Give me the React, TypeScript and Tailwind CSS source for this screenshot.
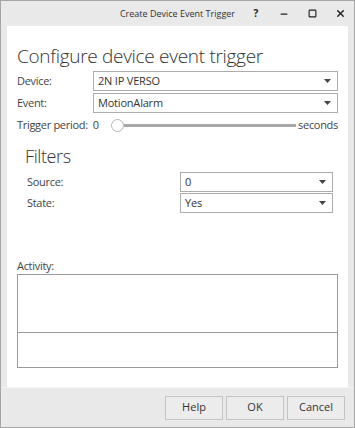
import { Minus, Square, X } from "lucide-react";

const FONT = { fontFamily: '"Open Sans", "Noto Sans", sans-serif' };

function Select({ value, className }: { value: string; className?: string }) {
  return (
    <div
      className={`flex h-[20px] items-center justify-between border border-[#acacac] bg-white pl-[4px] pr-[6px] text-[11px] tracking-[-0.2px] text-[#333] ${className ?? ""}`}
    >
      <span>{value}</span>
      <svg width="7" height="4" viewBox="0 0 7 4" className="fill-[#444]">
        <path d="M0 0h7L3.5 4z" />
      </svg>
    </div>
  );
}

export default function App() {
  return (
    <div
      className="flex h-[428px] w-[355px] flex-col border border-[#a6a6a6] bg-[#e9e9e9] text-[#444]"
      style={FONT}
    >
      {/* Title bar */}
      <div className="relative flex h-[25px] shrink-0 items-center justify-center text-[9px] text-[#333]">
        <span>Create Device Event Trigger</span>
        <div className="absolute right-0 top-0 flex h-full items-center text-[#222]">
          <span className="flex w-[28px] justify-center text-[10px] font-bold">?</span>
          <span className="flex w-[28px] justify-center">
            <Minus size={10} strokeWidth={3} />
          </span>
          <span className="flex w-[28px] justify-center">
            <Square size={9} strokeWidth={3} />
          </span>
          <span className="flex w-[28px] justify-center">
            <X size={11} strokeWidth={3} />
          </span>
        </div>
      </div>

      {/* Content */}
      <div className="mx-[6px] flex flex-1 flex-col bg-white px-[10px] pt-[18px] text-[11px] tracking-[-0.3px]">
        <h1 className="text-[19px] font-light leading-[24px] tracking-[-0.3px] text-[#333]">
          Configure device event trigger
        </h1>

        <div className="mt-[3px] flex flex-col gap-[2px]">
          <div className="flex items-center">
            <span className="w-[76px]">Device:</span>
            <Select value="2N IP VERSO" className="flex-1" />
          </div>
          <div className="flex items-center">
            <span className="w-[76px]">Event:</span>
            <Select value="MotionAlarm" className="flex-1" />
          </div>
          <div className="flex h-[20px] items-center">
            <span className="flex w-[94px] shrink-0">
              <span>Trigger period:</span>
              <span className="ml-[5px]">0</span>
            </span>
            <div className="flex flex-1 items-center">
              <span className="h-[13px] w-[13px] shrink-0 rounded-full border border-[#b5b5b5] bg-white" />
              <span className="h-[3px] flex-1 bg-[#a8a8a8]" />
            </div>
            <span className="ml-[2px]">seconds</span>
          </div>
        </div>

        <h2 className="mt-[10px] pl-[8px] text-[18px] font-light leading-[22px] tracking-[-0.4px] text-[#333]">
          Filters
        </h2>

        <div className="mt-[5px] flex flex-col gap-[1px] pl-[10px] pr-[5px]">
          <div className="flex items-center">
            <span className="w-[153px]">Source:</span>
            <Select value="0" className="flex-1" />
          </div>
          <div className="flex items-center">
            <span className="w-[153px]">State:</span>
            <Select value="Yes" className="flex-1" />
          </div>
        </div>

        <div className="mt-[45px] leading-[16px]">Activity:</div>
        <div className="flex h-[94px] flex-col border border-[#9a9a9a]">
          <div className="h-[58px] border-b border-[#9a9a9a]" />
          <div className="flex-1" />
        </div>
      </div>

      {/* Footer */}
      <div className="flex h-[40px] shrink-0 items-center justify-end gap-[3px] border-t border-[#f4f4f4] pr-[9px] text-[11px] text-[#333]">
        <button className="h-[24px] w-[58px] border border-[#c4c4c4] bg-[#ececec]">Help</button>
        <button className="h-[24px] w-[58px] border border-[#c4c4c4] bg-[#ececec]">OK</button>
        <button className="h-[24px] w-[58px] border border-[#c4c4c4] bg-[#ececec]">Cancel</button>
      </div>
    </div>
  );
}
